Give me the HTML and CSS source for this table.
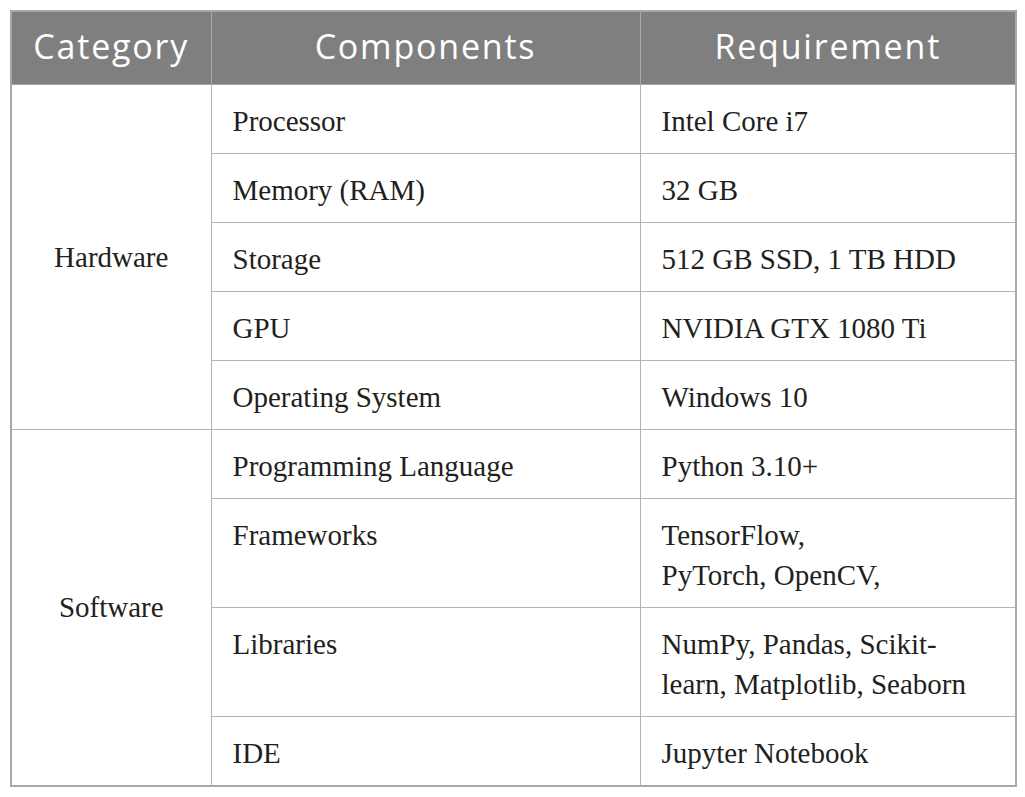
FILE: index.html
```html
<!DOCTYPE html>
<html>
<head>
<meta charset="utf-8">
<link rel="stylesheet" href="styles.css">
</head>
<body>
<table class="spec">
  <colgroup>
    <col class="c1"><col class="c2"><col class="c3">
  </colgroup>
  <thead>
    <tr><th>Category</th><th>Components</th><th>Requirement</th></tr>
  </thead>
  <tbody>
    <tr><td class="cat" rowspan="5">Hardware</td><td>Processor</td><td>Intel Core i7</td></tr>
    <tr><td>Memory (RAM)</td><td>32 GB</td></tr>
    <tr><td>Storage</td><td>512 GB SSD, 1 TB HDD</td></tr>
    <tr><td>GPU</td><td>NVIDIA GTX 1080 Ti</td></tr>
    <tr><td>Operating System</td><td>Windows 10</td></tr>
    <tr><td class="cat" rowspan="5">Software</td><td>Programming Language</td><td>Python 3.10+</td></tr>
    <tr><td>Frameworks</td><td>TensorFlow,<br>PyTorch, OpenCV,</td></tr>
    <tr><td>Libraries</td><td>NumPy, Pandas, Scikit-<br>learn, Matplotlib, Seaborn</td></tr>
    <tr><td>IDE</td><td>Jupyter Notebook</td></tr>
  </tbody>
</table>
</body>
</html>
```

FILE: styles.css
```css
html, body {
  margin: 0;
  padding: 0;
  background: #ffffff;
}
body {
  padding: 10px;
}
.spec {
  border-collapse: collapse;
  table-layout: fixed;
  width: 1005px;
  border: 2px solid #a8a8a8;
}
.c1 { width: 200px; }
.c2 { width: 429px; }
.c3 { width: 376px; }
.spec th {
  background: #7f7f7f;
  color: #ffffff;
  font-family: "Open Sans", Lato, sans-serif;
  font-weight: 400;
  font-size: 34px;
  letter-spacing: 1.8px;
  height: 73px;
  padding: 0 0 3px 0;
  text-align: center;
  vertical-align: middle;
  border: 1px solid #a8a8a8;
  box-sizing: border-box;
}
.spec td {
  font-family: "Liberation Serif", serif;
  font-size: 29px;
  line-height: 40px;
  color: #231f20;
  padding: 16px 10px 12px 21px;
  vertical-align: top;
  border: 1px solid #b4b4b4;
  white-space: nowrap;
}
.spec td.cat {
  text-align: center;
  vertical-align: middle;
  padding: 0;
}
```
